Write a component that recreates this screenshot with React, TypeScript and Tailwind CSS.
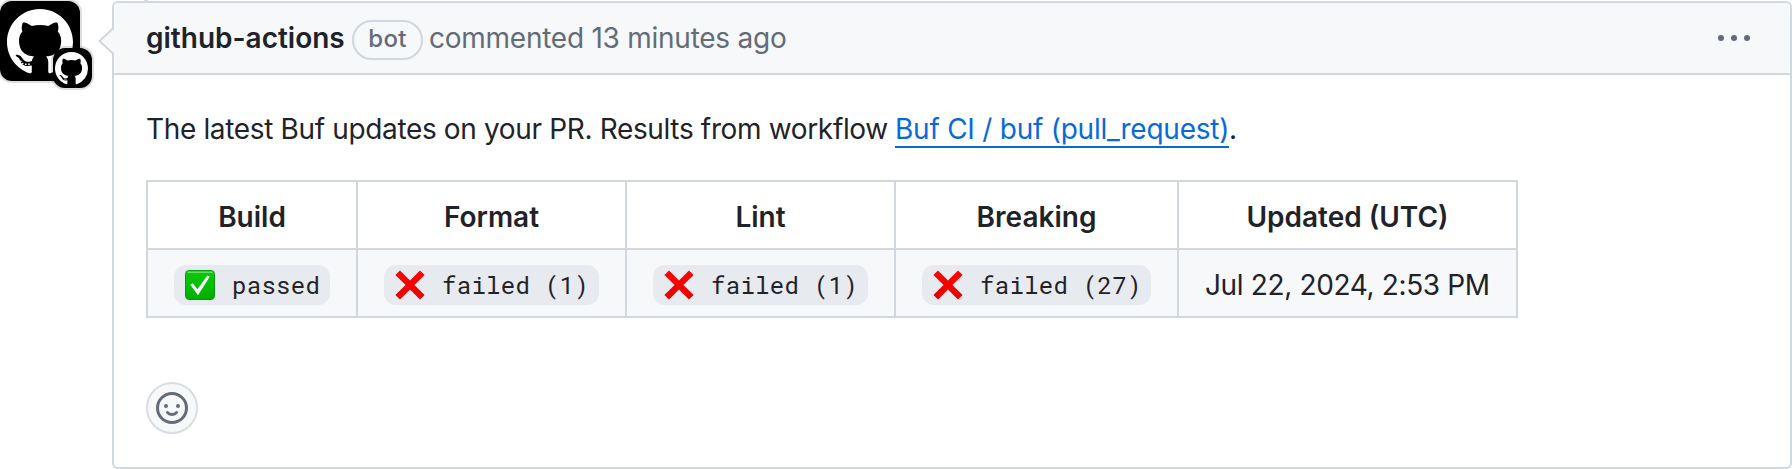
import type { ReactNode } from "react";

const MARK =
  "M8 0C3.58 0 0 3.58 0 8c0 3.54 2.29 6.53 5.47 7.59.4.07.55-.17.55-.38 0-.19-.01-.82-.01-1.49-2.01.37-2.53-.49-2.69-.94-.09-.23-.48-.94-.82-1.13-.28-.15-.68-.52-.01-.53.63-.01 1.08.58 1.23.82.72 1.21 1.87.87 2.33.66.07-.52.28-.87.51-1.07-1.78-.2-3.64-.89-3.64-3.95 0-.87.31-1.59.82-2.15-.08-.2-.36-1.02.08-2.12 0 0 .67-.21 2.2.82.64-.18 1.32-.27 2-.27.68 0 1.36.09 2 .27 1.53-1.04 2.2-.82 2.2-.82.44 1.1.16 1.92.08 2.12.51.56.82 1.27.82 2.15 0 3.07-1.87 3.75-3.65 3.95.29.25.54.73.54 1.48 0 1.07-.01 1.93-.01 2.2 0 .21.15.46.55.38A8.013 8.013 0 0 0 16 8c0-4.42-3.58-8-8-8z";

function Mark({ className }: { className: string }) {
  return (
    <svg viewBox="0 0 16 16" className={className} fill="#fff" aria-hidden="true">
      <path d={MARK} />
      <path
        d="M2.6 11.9Q3.3 12.6 3.7 13.1T6 13.3"
        fill="none"
        stroke="#fff"
        strokeWidth="0.35"
        strokeDasharray="0.4 0.4"
      />
    </svg>
  );
}

function Avatar() {
  return (
    <div className="relative mt-px h-20 w-20 shrink-0 rounded-xl bg-black pt-[8px] pl-[7px] shadow-[0_0_0_2px_rgba(31,35,40,0.15)]">
      <Mark className="block h-[66px] w-[66px]" />
      <div className="absolute top-[47px] left-[53px] h-10 w-[39px] rounded-xl bg-black pt-[4px] pl-[2px] shadow-[0_0_0_2px_rgba(31,35,40,0.15)]">
        <Mark className="block h-[33px] w-[33px]" />
      </div>
    </div>
  );
}

function Check() {
  return (
    <svg viewBox="0 0 30 30" className="block h-[30px] w-[30px] shrink-0" aria-hidden="true">
      <defs>
        <linearGradient id="tile" x1="0" y1="0" x2="0" y2="1">
          <stop offset="0" stopColor="#12c412" />
          <stop offset="0.5" stopColor="#00c200" />
          <stop offset="1" stopColor="#00ac00" />
        </linearGradient>
      </defs>
      <rect x="0" y="0" width="30" height="30" rx="4.5" fill="#0a8f14" />
      <rect x="0.8" y="0.8" width="28.4" height="28.4" rx="4" fill="url(#tile)" />
      <path d="M3 2.2h24" stroke="#5fe05f" strokeWidth="1.4" strokeLinecap="round" />
      <path d="M5.2 14.6 8 13.4 12.4 19.2 22.4 5.6 24.8 6.4 13 25.2Z" fill="#fff" />
    </svg>
  );
}

function Cross() {
  return (
    <svg viewBox="0 0 30 30" className="block h-[30px] w-[30px] shrink-0" aria-hidden="true">
      <defs>
        <linearGradient id="cross" x1="0" y1="0" x2="0" y2="1">
          <stop offset="0" stopColor="#ff0500" />
          <stop offset="1" stopColor="#e60000" />
        </linearGradient>
      </defs>
      <path
        d="M5 .4 15 10.6 25 .4 29.6 5 19.4 15 29.6 25 25 29.6 15 19.4 5 29.6 .4 25 10.6 15 .4 5Z"
        fill="url(#cross)"
      />
    </svg>
  );
}

function Status({ ok, children }: { ok?: boolean; children: string }) {
  return (
    <span className="flex h-10 items-center rounded-xl bg-[#e7eaef] pl-[11px] font-['Roboto_Mono','Noto_Sans_Mono',monospace] text-[24px] leading-10 tracking-[0.3px] whitespace-pre">
      {ok ? <Check /> : <Cross />}
      <span className="pb-px pl-[17px]">{children}</span>
    </span>
  );
}

function Head({ children }: { children: ReactNode }) {
  return (
    <div className="flex h-[66px] items-center justify-center bg-white pt-[4px] font-semibold">
      {children}
    </div>
  );
}

function Cell({ children }: { children: ReactNode }) {
  return <div className="flex h-[66px] items-start bg-[#f6f8fa] px-[26px] pt-[15px]">{children}</div>;
}

export default function App() {
  return (
    <div className="relative flex h-[469px] w-[1792px] overflow-hidden bg-white font-['Inter',sans-serif] text-[28px] leading-[42px] text-[#1f2328]">
      <div className="absolute top-0 left-[144px] h-px w-1 bg-[#d8dee4]" />
      <Avatar />
      <div className="relative mt-px ml-8 flex h-[468px] w-[1680px] flex-col rounded-[6px] border-2 border-[#d0d7de]">
        <svg
          viewBox="0 0 16 28"
          className="absolute top-[24px] -left-[16px] h-[28px] w-[16px]"
          aria-hidden="true"
        >
          <path d="M16 1.6 2.5 14 16 26.4Z" fill="#f6f8fa" />
          <path d="M15 1.4 1.4 14 15 26.6" fill="none" stroke="#d0d7de" strokeWidth="2" />
        </svg>
        <header className="flex h-[72px] items-center rounded-t-[4px] border-b-2 border-[#d0d7de] bg-[#f6f8fa] pl-8 text-[#636c76]">
          <span className="w-[198px] font-semibold tracking-[0px] whitespace-nowrap text-[#1f2328]">
            github-actions
          </span>
          <span className="mt-[3px] ml-[8px] flex h-10 w-[71px] items-center justify-center rounded-full border-2 border-[#d0d7de] pb-px text-[24px] font-medium tracking-[0.3px]">
            bot
          </span>
          <span className="ml-[6px] tracking-[-0.25px] whitespace-nowrap">commented 13 minutes ago</span>
          <svg viewBox="0 0 32 6" className="mr-[40px] ml-auto h-[6px] w-[32px]" fill="#636c76">
            <circle cx="3" cy="3" r="3" />
            <circle cx="16" cy="3" r="3" />
            <circle cx="29" cy="3" r="3" />
          </svg>
        </header>
        <div className="pt-8 pl-8">
          <p className="flex h-[42px] whitespace-nowrap">
            <span className="w-[749px] pt-px tracking-[-0.35px]">
              The latest Buf updates on your PR. Results from workflow
            </span>
            <a className="h-[41px] w-[334px] border-b-2 border-[#0969da] pt-px tracking-[-0.24px] text-[#0969da]">
              Buf CI / buf (pull_request)
            </a>
            <span className="pt-px">.</span>
          </p>
          <div className="mt-[32px] -translate-y-px">
            <div className="grid w-[1372px] grid-cols-[208px_267px_267px_281px_337px] gap-[2px] border-2 border-[#d0d7de] bg-[#d0d7de] whitespace-nowrap">
              <Head>Build</Head>
              <Head>Format</Head>
              <Head>Lint</Head>
              <Head>Breaking</Head>
              <Head>Updated (UTC)</Head>
              <Cell>
                <div className="w-[156px]">
                  <Status ok>passed</Status>
                </div>
              </Cell>
              <Cell>
                <div className="w-[215px]">
                  <Status>failed (1)</Status>
                </div>
              </Cell>
              <Cell>
                <div className="w-[215px]">
                  <Status>failed (1)</Status>
                </div>
              </Cell>
              <Cell>
                <div className="w-[229px]">
                  <Status>failed (27)</Status>
                </div>
              </Cell>
              <Cell>
                <span className="-mt-px tracking-[-0.36px]">Jul 22, 2024, 2:53 PM</span>
              </Cell>
            </div>
            <button className="mt-[64px] flex h-[52px] w-[52px] items-center justify-center rounded-full border-2 border-[#d8dee4] bg-[#f6f8fa]">
              <svg viewBox="0 0 16 16" className="h-8 w-8" fill="#636c76" aria-hidden="true">
                <path d="M8 0a8 8 0 1 1 0 16A8 8 0 0 1 8 0ZM1.5 8a6.5 6.5 0 1 0 13 0 6.5 6.5 0 0 0-13 0Z" />
                <circle cx="5" cy="7" r="1" />
                <circle cx="11" cy="7" r="1" />
                <path
                  d="M5.75 10.25C6.2 10.9 7 11.25 8 11.25S9.8 10.9 10.25 10.25"
                  fill="none"
                  stroke="#636c76"
                  strokeWidth="1.5"
                  strokeLinecap="round"
                />
              </svg>
            </button>
          </div>
        </div>
      </div>
    </div>
  );
}
